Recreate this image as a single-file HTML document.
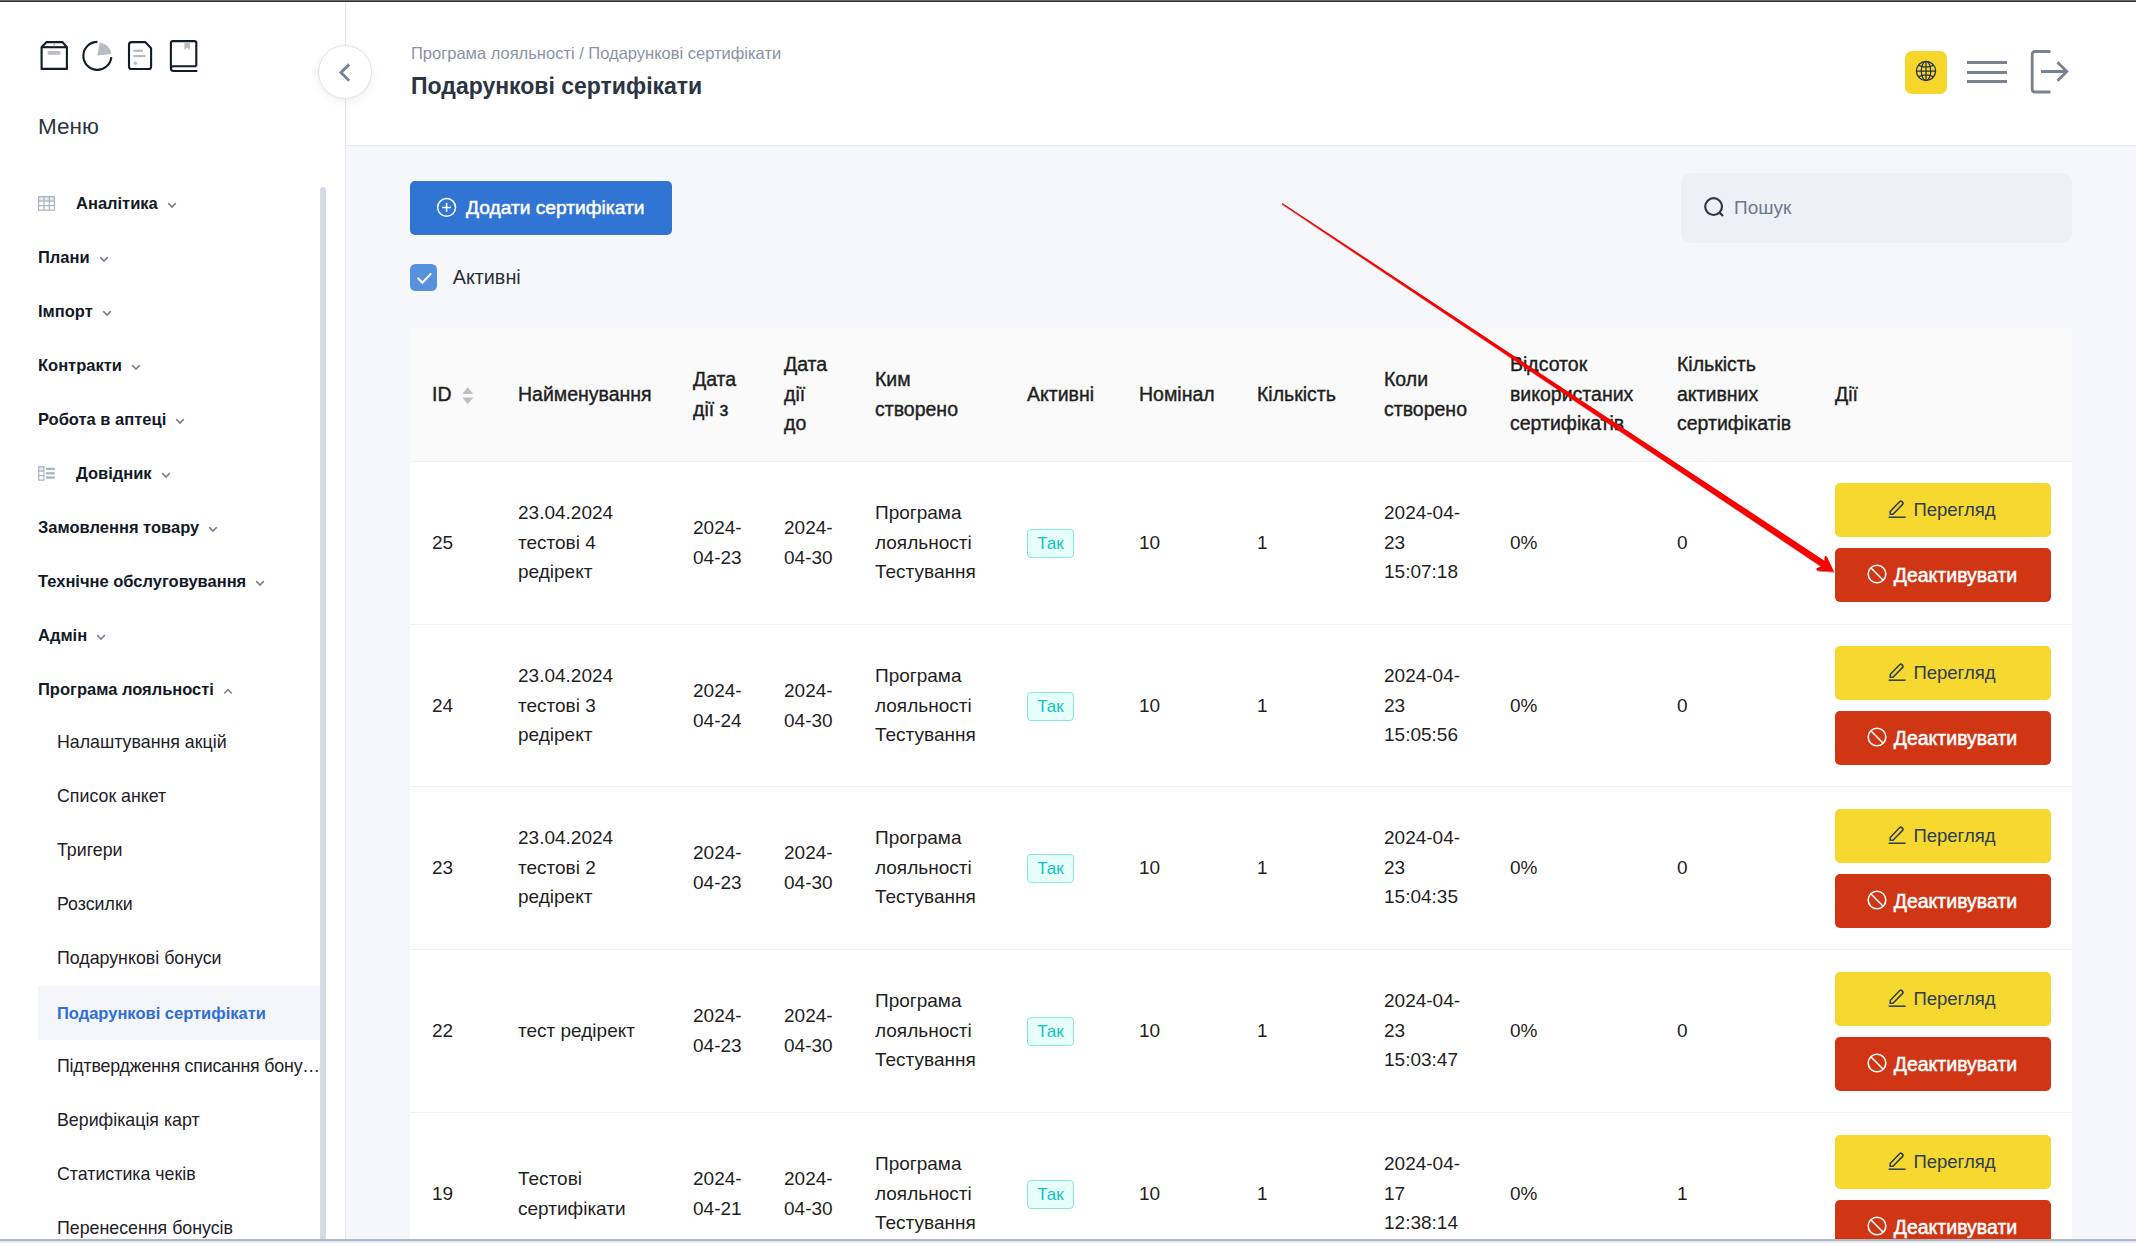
<!DOCTYPE html>
<html><head><meta charset="utf-8">
<style>
*{box-sizing:border-box;margin:0;padding:0}
html,body{width:2136px;height:1243px;overflow:hidden;background:#f5f7fa;font-family:"Liberation Sans",sans-serif;}
.abs{position:absolute}
#topline{left:0;top:0;width:2136px;height:2px;background:#2f2f2f;border-top:1px solid #676767}
#side{left:0;top:2px;width:345px;height:1237px;background:#fff;overflow:hidden}
#sideborder{left:345px;top:2px;width:1px;height:1237px;background:#e4e8ee}
#header{left:346px;top:2px;width:1790px;height:143px;background:#fff}
#headborder{left:346px;top:145px;width:1790px;height:1px;background:#e4e8ee}
#bottomline{left:0;top:1239px;width:2136px;height:2px;background:#b3b8bf}
#bottomstrip{left:0;top:1241px;width:2136px;height:2px;background:#e0eaf4}
.txt{white-space:nowrap}
.mi{font-size:16.5px;line-height:16.5px;font-weight:700;color:#121a27;white-space:nowrap}
.mi .chev{margin-left:9px;vertical-align:0px}
.ms{font-size:17.8px;line-height:17.8px;color:#1e2127;white-space:nowrap}
.ell{overflow:hidden;text-overflow:ellipsis;line-height:20px;height:20px}
.mact{font-size:16.5px;line-height:16.5px;font-weight:700;color:#2f6fd5;white-space:nowrap}
/*MAINCSS*/
.cellwrap{display:flex;align-items:center;white-space:nowrap}
.td{font-size:19px;line-height:29.5px;color:#1f1f1f}
.th{font-size:19.5px;line-height:29.5px;color:#1f1f1f;-webkit-text-stroke:0.4px #1f1f1f}
.tag{width:47px;height:29px;border:1px solid #87e8de;background:#e6fffb;border-radius:4px;color:#13c2c2;font-size:17px;line-height:27px;text-align:center}
.btn{left:1835px;width:216px;height:54px;border-radius:5px;display:flex;align-items:center;justify-content:center;white-space:nowrap}
.yb{background:#f7d82f;color:#2c3e50;font-size:18.5px}
.rb{background:#d03514;color:#fff;font-size:19.5px;-webkit-text-stroke:0.5px #fff}
/*ENDMAINCSS*/
</style></head>
<body>
<div id="topline" class="abs"></div>
<div id="side" class="abs"></div>
<div id="sideborder" class="abs"></div>
<div id="header" class="abs"></div>
<div id="headborder" class="abs"></div>

<svg class="abs" style="left:0;top:0" width="345" height="100" viewBox="0 0 345 100">
<g fill="none" stroke="#111b29" stroke-width="2.1" stroke-linejoin="round">
<path d="M41.6,47.2 L46.6,42.1 L62.6,42.1 L66.9,47.2 L66.9,68.9 L41.6,68.9 Z"/>
<path d="M41.6,47.2 L66.9,47.2"/>
<path d="M97.4,41.9 A14,14 0 1 0 111.3,57.2"/>
<path d="M131.6,42.1 L145.2,42.1 L151.1,48.2 L151.1,66.4 Q151.1,69 148.5,69 L131.6,69 Q129,69 129,66.4 L129,44.7 Q129,42.1 131.6,42.1 Z"/>
<path d="M196.3,66.3 L196.3,42.9 Q196.3,41.1 194.5,41.1 L172.9,41.1 Q170.9,41.1 170.9,43.1 L170.9,68.3"/>
<path d="M196.3,66.3 L174,66.3 Q170.9,66.3 170.9,68.6 Q170.9,71 173.6,71 L197.3,71"/>
</g>
<g fill="#b9bdc3">
<rect x="47.5" y="51" width="13.2" height="3.7" rx="1.85"/>
<rect x="53.6" y="43" width="1.6" height="3.2"/>
<path d="M97.3,55.4 L99.8,42.4 A13.2,13.2 0 0 1 111.4,54.1 Z"/>
<rect x="133.3" y="49.6" width="9.6" height="2.3"/>
<rect x="133.3" y="54.9" width="12.2" height="2.3"/>
<circle cx="135.4" cy="63.3" r="1.7"/>
<path d="M184.4,42.1 L190,42.1 L190,50 L187.2,47.6 L184.4,50 Z"/>
</g>
</svg>
<div class="abs" style="left:38px;top:116.2px;font-size:22.5px;line-height:22.5px;color:#2b3442">Меню</div>
<svg class="abs" style="left:38px;top:196px" width="18" height="15" viewBox="38 196 18 15">
<rect x="38.6" y="196.6" width="15.8" height="4.6" fill="#e4e7ec"/>
<g fill="none" stroke="#aab3c0" stroke-width="1.2">
<rect x="38.6" y="196.6" width="15.8" height="13.6"/>
<path d="M38.6,201.2 H54.4 M38.6,205.6 H54.4 M44,196.6 V210.2 M49.4,196.6 V210.2"/>
</g></svg>
<svg class="abs" style="left:38px;top:465px" width="18" height="17" viewBox="38 465 18 17">
<rect x="38.7" y="466.7" width="5.2" height="4.5" fill="#e4e7ec"/>
<g fill="none" stroke="#aab3c0" stroke-width="1.2">
<rect x="38.7" y="466.7" width="5.2" height="13.4"/>
<path d="M38.7,471.2 H43.9 M38.7,475.6 H43.9"/>
</g>
<g fill="#aab3c0"><rect x="46" y="467.8" width="8.8" height="2.3"/><rect x="46" y="472.2" width="8.8" height="2.3"/><rect x="46" y="476.4" width="8.8" height="2.3"/></g>
</svg>
<div class="abs" style="left:320px;top:187px;width:6px;height:1052px;background:#d3dae3;border-radius:3px 3px 0 0"></div>
<div class="abs mi" style="left:76px;top:195.03px">Аналітика<svg class="chev" width="10" height="7" viewBox="0 0 10 7"><path d="M1.2,1.2 L5,5 L8.8,1.2" stroke="#7a8594" stroke-width="1.7" fill="none"/></svg></div>
<div class="abs mi" style="left:38px;top:249.03px">Плани<svg class="chev" width="10" height="7" viewBox="0 0 10 7"><path d="M1.2,1.2 L5,5 L8.8,1.2" stroke="#7a8594" stroke-width="1.7" fill="none"/></svg></div>
<div class="abs mi" style="left:38px;top:303.03px">Імпорт<svg class="chev" width="10" height="7" viewBox="0 0 10 7"><path d="M1.2,1.2 L5,5 L8.8,1.2" stroke="#7a8594" stroke-width="1.7" fill="none"/></svg></div>
<div class="abs mi" style="left:38px;top:357.03px">Контракти<svg class="chev" width="10" height="7" viewBox="0 0 10 7"><path d="M1.2,1.2 L5,5 L8.8,1.2" stroke="#7a8594" stroke-width="1.7" fill="none"/></svg></div>
<div class="abs mi" style="left:38px;top:411.03px">Робота в аптеці<svg class="chev" width="10" height="7" viewBox="0 0 10 7"><path d="M1.2,1.2 L5,5 L8.8,1.2" stroke="#7a8594" stroke-width="1.7" fill="none"/></svg></div>
<div class="abs mi" style="left:76px;top:465.03px">Довідник<svg class="chev" width="10" height="7" viewBox="0 0 10 7"><path d="M1.2,1.2 L5,5 L8.8,1.2" stroke="#7a8594" stroke-width="1.7" fill="none"/></svg></div>
<div class="abs mi" style="left:38px;top:519.03px">Замовлення товару<svg class="chev" width="10" height="7" viewBox="0 0 10 7"><path d="M1.2,1.2 L5,5 L8.8,1.2" stroke="#7a8594" stroke-width="1.7" fill="none"/></svg></div>
<div class="abs mi" style="left:38px;top:573.03px">Технічне обслуговування<svg class="chev" width="10" height="7" viewBox="0 0 10 7"><path d="M1.2,1.2 L5,5 L8.8,1.2" stroke="#7a8594" stroke-width="1.7" fill="none"/></svg></div>
<div class="abs mi" style="left:38px;top:627.03px">Адмін<svg class="chev" width="10" height="7" viewBox="0 0 10 7"><path d="M1.2,1.2 L5,5 L8.8,1.2" stroke="#7a8594" stroke-width="1.7" fill="none"/></svg></div>
<div class="abs mi" style="left:38px;top:681.03px">Програма лояльності<svg class="chev" width="10" height="7" viewBox="0 0 10 7"><path d="M1.2,5.5 L5,1.7 L8.8,5.5" stroke="#7a8594" stroke-width="1.7" fill="none"/></svg></div>
<div class="abs ms" style="left:57px;top:734.23px">Налаштування акцій</div>
<div class="abs ms" style="left:57px;top:788.23px">Список анкет</div>
<div class="abs ms" style="left:57px;top:842.23px">Тригери</div>
<div class="abs ms" style="left:57px;top:896.23px">Розсилки</div>
<div class="abs ms" style="left:57px;top:950.23px">Подарункові бонуси</div>
<div class="abs" style="left:38px;top:986px;width:282px;height:54px;background:#f4f6fa"></div>
<div class="abs mact" style="left:57px;top:1005.03px">Подарункові сертифікати</div>
<div class="abs ms" style="left:57px;top:1058.23px;letter-spacing:-0.19px">Підтвердження списання бону…</div>
<div class="abs ms" style="left:57px;top:1112.23px">Верифікація карт</div>
<div class="abs ms" style="left:57px;top:1166.23px">Статистика чеків</div>
<div class="abs ms" style="left:57px;top:1220.23px">Перенесення бонусів</div>
<!-- MAIN START -->
<div class="abs" style="left:318px;top:45px;width:54px;height:54px;border-radius:50%;background:#fff;border:1px solid #dde3ea;box-shadow:0 3px 10px rgba(30,40,60,0.07)"></div>
<svg class="abs" style="left:330px;top:55px" width="30" height="35" viewBox="330 55 30 35"><path d="M349.2,64.4 L340.9,72.6 L349.2,80.8" fill="none" stroke="#7a8594" stroke-width="2.9"/></svg>
<div class="abs txt" style="left:411px;top:45.3px;font-size:16.5px;line-height:16.5px;color:#8a94a3">Програма лояльності / Подарункові сертифікати</div>
<div class="abs txt" style="left:411px;top:74.5px;font-size:23px;line-height:23px;font-weight:700;color:#2b3442">Подарункові сертифікати</div>
<div class="abs" style="left:1905px;top:51px;width:42px;height:43px;border-radius:7px;background:#f7d62b"></div>
<svg class="abs" style="left:1914px;top:59px" width="24" height="24" viewBox="0 0 24 24"><g fill="none" stroke="#263347" stroke-width="1.25"><circle cx="12" cy="12" r="9.6"/><ellipse cx="12" cy="12" rx="4.7" ry="9.6"/><path d="M12,2.4 V21.6 M2.4,12 H21.6 M4.4,6.2 Q12,10 19.6,6.2 M4.4,17.8 Q12,14 19.6,17.8"/></g></svg>
<svg class="abs" style="left:1960px;top:50px" width="120" height="46" viewBox="1960 50 120 46"><g fill="none" stroke="#778391"><path d="M1967,62.5 H2007 M1967,72.5 H2007 M1967,81.5 H2007" stroke-width="3"/>
<path d="M2050.5,51.5 H2035 Q2032.2,51.5 2032.2,54.3 V89.2 Q2032.2,92 2035,92 H2050.5" stroke-width="2.8"/>
<path d="M2041,71.5 H2066.5 M2057.5,62.2 L2066.8,71.5 L2057.5,80.8" stroke-width="2.8"/></g></svg>

<div class="abs" style="left:410px;top:181px;width:262px;height:54px;border-radius:5px;background:#3074d4"></div>
<svg class="abs" style="left:436px;top:197px" width="22" height="22" viewBox="0 0 22 22"><g fill="none" stroke="#fff" stroke-width="1.5"><circle cx="10.6" cy="10.4" r="8.9"/><path d="M10.6,6 V14.8 M6.2,10.4 H15"/></g></svg>
<div class="abs txt" style="left:466px;top:197.9px;font-size:19.2px;line-height:19.2px;color:#fff;-webkit-text-stroke:0.5px #fff">Додати сертифікати</div>
<div class="abs" style="left:1681px;top:173px;width:391px;height:70px;border-radius:10px;background:#edf0f5"></div>
<svg class="abs" style="left:1700px;top:194px" width="28" height="28" viewBox="0 0 28 28"><g fill="none" stroke="#2d3a4a" stroke-width="2.2"><circle cx="13.6" cy="12.6" r="8.4"/><path d="M19.6,18.6 L23,22"/></g></svg>
<div class="abs txt" style="left:1734px;top:198.2px;font-size:19px;line-height:19px;color:#6c7a8c">Пошук</div>
<div class="abs" style="left:410px;top:264.2px;width:27px;height:27px;border-radius:5.5px;background:#5591dd"></div>
<svg class="abs" style="left:410px;top:264px" width="27" height="27" viewBox="0 0 27 27"><path d="M7.6,13.8 L12.4,18.7 L21.2,9.4" fill="none" stroke="#fff" stroke-width="2.1"/></svg>
<div class="abs txt" style="left:452.7px;top:267.7px;font-size:19.8px;line-height:19.8px;color:#2b2f38">Активні</div>

<div class="abs" style="left:410px;top:328px;width:1662px;height:915px;background:#fff;border-radius:2px 2px 0 0"></div>
<div class="abs" style="left:410px;top:328px;width:1662px;height:133px;background:#fafafa;border-radius:2px 2px 0 0"></div>
<div class="abs" style="left:410px;top:461px;width:1662px;height:1px;background:#f0f0f0"></div>
<div class="abs cellwrap" style="left:432px;top:334.5px;height:120px"><div class="th">ID</div></div>
<svg class="abs" style="left:461.5px;top:386.5px" width="12" height="18" viewBox="0 0 12 18"><path d="M0.3,6.9 L5.8,0.3 L11.3,6.9 Z M0.3,10.6 L5.8,17.2 L11.3,10.6 Z" fill="#bfbfbf"/></svg>
<div class="abs cellwrap" style="left:518px;top:334.5px;height:120px"><div class="th">Найменування</div></div>
<div class="abs cellwrap" style="left:693px;top:334.5px;height:120px"><div class="th">Дата<br>дії з</div></div>
<div class="abs cellwrap" style="left:784px;top:334.5px;height:120px"><div class="th">Дата<br>дії<br>до</div></div>
<div class="abs cellwrap" style="left:875px;top:334.5px;height:120px"><div class="th">Ким<br>створено</div></div>
<div class="abs cellwrap" style="left:1027px;top:334.5px;height:120px"><div class="th">Активні</div></div>
<div class="abs cellwrap" style="left:1139px;top:334.5px;height:120px"><div class="th">Номінал</div></div>
<div class="abs cellwrap" style="left:1257px;top:334.5px;height:120px"><div class="th">Кількість</div></div>
<div class="abs cellwrap" style="left:1384px;top:334.5px;height:120px"><div class="th">Коли<br>створено</div></div>
<div class="abs cellwrap" style="left:1510px;top:334.5px;height:120px"><div class="th">Відсоток<br>використаних<br>сертифікатів</div></div>
<div class="abs cellwrap" style="left:1677px;top:334.5px;height:120px"><div class="th">Кількість<br>активних<br>сертифікатів</div></div>
<div class="abs cellwrap" style="left:1835px;top:334.5px;height:120px"><div class="th">Дії</div></div>
<div class="abs cellwrap" style="left:432px;top:482.5px;height:120px"><div class="td">25</div></div>
<div class="abs cellwrap" style="left:518px;top:482.5px;height:120px"><div class="td">23.04.2024<br>тестові 4<br>редірект</div></div>
<div class="abs cellwrap" style="left:693px;top:482.5px;height:120px"><div class="td">2024-<br>04-23</div></div>
<div class="abs cellwrap" style="left:784px;top:482.5px;height:120px"><div class="td">2024-<br>04-30</div></div>
<div class="abs cellwrap" style="left:875px;top:482.5px;height:120px"><div class="td">Програма<br>лояльності<br>Тестування</div></div>
<div class="abs tag" style="left:1027px;top:529.0px">Так</div>
<div class="abs cellwrap" style="left:1139px;top:482.5px;height:120px"><div class="td">10</div></div>
<div class="abs cellwrap" style="left:1257px;top:482.5px;height:120px"><div class="td">1</div></div>
<div class="abs cellwrap" style="left:1384px;top:482.5px;height:120px"><div class="td">2024-04-<br>23<br>15:07:18</div></div>
<div class="abs cellwrap" style="left:1510px;top:482.5px;height:120px"><div class="td">0%</div></div>
<div class="abs cellwrap" style="left:1677px;top:482.5px;height:120px"><div class="td">0</div></div>
<div class="abs btn yb" style="top:483px"><svg width="20" height="20" viewBox="0 0 20 20" style="margin-right:6px;margin-left:-3px;position:relative;top:-2.5px"><g fill="none" stroke="#2c3e50" stroke-width="1.5"><path d="M3.2,13.4 L12.8,3.6 Q13.8,2.6 14.8,3.6 L15.6,4.4 Q16.6,5.4 15.6,6.4 L6,16.2 L3.2,16.2 Z"/><path d="M1.6,19.2 H18.6"/></g></svg>Перегляд</div>
<div class="abs btn rb" style="top:548px"><svg width="20" height="20" viewBox="0 0 20 20" style="margin-right:7px;position:relative;top:-1px;margin-left:-2px"><g fill="none" stroke="#fff" stroke-width="1.6"><circle cx="10" cy="10" r="8.8"/><path d="M3.8,3.8 L16.2,16.2"/></g></svg>Деактивувати</div>
<div class="abs cellwrap" style="left:432px;top:645.5px;height:120px"><div class="td">24</div></div>
<div class="abs cellwrap" style="left:518px;top:645.5px;height:120px"><div class="td">23.04.2024<br>тестові 3<br>редірект</div></div>
<div class="abs cellwrap" style="left:693px;top:645.5px;height:120px"><div class="td">2024-<br>04-24</div></div>
<div class="abs cellwrap" style="left:784px;top:645.5px;height:120px"><div class="td">2024-<br>04-30</div></div>
<div class="abs cellwrap" style="left:875px;top:645.5px;height:120px"><div class="td">Програма<br>лояльності<br>Тестування</div></div>
<div class="abs tag" style="left:1027px;top:692.0px">Так</div>
<div class="abs cellwrap" style="left:1139px;top:645.5px;height:120px"><div class="td">10</div></div>
<div class="abs cellwrap" style="left:1257px;top:645.5px;height:120px"><div class="td">1</div></div>
<div class="abs cellwrap" style="left:1384px;top:645.5px;height:120px"><div class="td">2024-04-<br>23<br>15:05:56</div></div>
<div class="abs cellwrap" style="left:1510px;top:645.5px;height:120px"><div class="td">0%</div></div>
<div class="abs cellwrap" style="left:1677px;top:645.5px;height:120px"><div class="td">0</div></div>
<div class="abs btn yb" style="top:646px"><svg width="20" height="20" viewBox="0 0 20 20" style="margin-right:6px;margin-left:-3px;position:relative;top:-2.5px"><g fill="none" stroke="#2c3e50" stroke-width="1.5"><path d="M3.2,13.4 L12.8,3.6 Q13.8,2.6 14.8,3.6 L15.6,4.4 Q16.6,5.4 15.6,6.4 L6,16.2 L3.2,16.2 Z"/><path d="M1.6,19.2 H18.6"/></g></svg>Перегляд</div>
<div class="abs btn rb" style="top:711px"><svg width="20" height="20" viewBox="0 0 20 20" style="margin-right:7px;position:relative;top:-1px;margin-left:-2px"><g fill="none" stroke="#fff" stroke-width="1.6"><circle cx="10" cy="10" r="8.8"/><path d="M3.8,3.8 L16.2,16.2"/></g></svg>Деактивувати</div>
<div class="abs cellwrap" style="left:432px;top:807.5px;height:120px"><div class="td">23</div></div>
<div class="abs cellwrap" style="left:518px;top:807.5px;height:120px"><div class="td">23.04.2024<br>тестові 2<br>редірект</div></div>
<div class="abs cellwrap" style="left:693px;top:807.5px;height:120px"><div class="td">2024-<br>04-23</div></div>
<div class="abs cellwrap" style="left:784px;top:807.5px;height:120px"><div class="td">2024-<br>04-30</div></div>
<div class="abs cellwrap" style="left:875px;top:807.5px;height:120px"><div class="td">Програма<br>лояльності<br>Тестування</div></div>
<div class="abs tag" style="left:1027px;top:854.0px">Так</div>
<div class="abs cellwrap" style="left:1139px;top:807.5px;height:120px"><div class="td">10</div></div>
<div class="abs cellwrap" style="left:1257px;top:807.5px;height:120px"><div class="td">1</div></div>
<div class="abs cellwrap" style="left:1384px;top:807.5px;height:120px"><div class="td">2024-04-<br>23<br>15:04:35</div></div>
<div class="abs cellwrap" style="left:1510px;top:807.5px;height:120px"><div class="td">0%</div></div>
<div class="abs cellwrap" style="left:1677px;top:807.5px;height:120px"><div class="td">0</div></div>
<div class="abs btn yb" style="top:809px"><svg width="20" height="20" viewBox="0 0 20 20" style="margin-right:6px;margin-left:-3px;position:relative;top:-2.5px"><g fill="none" stroke="#2c3e50" stroke-width="1.5"><path d="M3.2,13.4 L12.8,3.6 Q13.8,2.6 14.8,3.6 L15.6,4.4 Q16.6,5.4 15.6,6.4 L6,16.2 L3.2,16.2 Z"/><path d="M1.6,19.2 H18.6"/></g></svg>Перегляд</div>
<div class="abs btn rb" style="top:874px"><svg width="20" height="20" viewBox="0 0 20 20" style="margin-right:7px;position:relative;top:-1px;margin-left:-2px"><g fill="none" stroke="#fff" stroke-width="1.6"><circle cx="10" cy="10" r="8.8"/><path d="M3.8,3.8 L16.2,16.2"/></g></svg>Деактивувати</div>
<div class="abs cellwrap" style="left:432px;top:970.5px;height:120px"><div class="td">22</div></div>
<div class="abs cellwrap" style="left:518px;top:970.5px;height:120px"><div class="td">тест редірект</div></div>
<div class="abs cellwrap" style="left:693px;top:970.5px;height:120px"><div class="td">2024-<br>04-23</div></div>
<div class="abs cellwrap" style="left:784px;top:970.5px;height:120px"><div class="td">2024-<br>04-30</div></div>
<div class="abs cellwrap" style="left:875px;top:970.5px;height:120px"><div class="td">Програма<br>лояльності<br>Тестування</div></div>
<div class="abs tag" style="left:1027px;top:1017.0px">Так</div>
<div class="abs cellwrap" style="left:1139px;top:970.5px;height:120px"><div class="td">10</div></div>
<div class="abs cellwrap" style="left:1257px;top:970.5px;height:120px"><div class="td">1</div></div>
<div class="abs cellwrap" style="left:1384px;top:970.5px;height:120px"><div class="td">2024-04-<br>23<br>15:03:47</div></div>
<div class="abs cellwrap" style="left:1510px;top:970.5px;height:120px"><div class="td">0%</div></div>
<div class="abs cellwrap" style="left:1677px;top:970.5px;height:120px"><div class="td">0</div></div>
<div class="abs btn yb" style="top:972px"><svg width="20" height="20" viewBox="0 0 20 20" style="margin-right:6px;margin-left:-3px;position:relative;top:-2.5px"><g fill="none" stroke="#2c3e50" stroke-width="1.5"><path d="M3.2,13.4 L12.8,3.6 Q13.8,2.6 14.8,3.6 L15.6,4.4 Q16.6,5.4 15.6,6.4 L6,16.2 L3.2,16.2 Z"/><path d="M1.6,19.2 H18.6"/></g></svg>Перегляд</div>
<div class="abs btn rb" style="top:1037px"><svg width="20" height="20" viewBox="0 0 20 20" style="margin-right:7px;position:relative;top:-1px;margin-left:-2px"><g fill="none" stroke="#fff" stroke-width="1.6"><circle cx="10" cy="10" r="8.8"/><path d="M3.8,3.8 L16.2,16.2"/></g></svg>Деактивувати</div>
<div class="abs cellwrap" style="left:432px;top:1133.5px;height:120px"><div class="td">19</div></div>
<div class="abs cellwrap" style="left:518px;top:1133.5px;height:120px"><div class="td">Тестові<br>сертифікати</div></div>
<div class="abs cellwrap" style="left:693px;top:1133.5px;height:120px"><div class="td">2024-<br>04-21</div></div>
<div class="abs cellwrap" style="left:784px;top:1133.5px;height:120px"><div class="td">2024-<br>04-30</div></div>
<div class="abs cellwrap" style="left:875px;top:1133.5px;height:120px"><div class="td">Програма<br>лояльності<br>Тестування</div></div>
<div class="abs tag" style="left:1027px;top:1180.0px">Так</div>
<div class="abs cellwrap" style="left:1139px;top:1133.5px;height:120px"><div class="td">10</div></div>
<div class="abs cellwrap" style="left:1257px;top:1133.5px;height:120px"><div class="td">1</div></div>
<div class="abs cellwrap" style="left:1384px;top:1133.5px;height:120px"><div class="td">2024-04-<br>17<br>12:38:14</div></div>
<div class="abs cellwrap" style="left:1510px;top:1133.5px;height:120px"><div class="td">0%</div></div>
<div class="abs cellwrap" style="left:1677px;top:1133.5px;height:120px"><div class="td">1</div></div>
<div class="abs btn yb" style="top:1135px"><svg width="20" height="20" viewBox="0 0 20 20" style="margin-right:6px;margin-left:-3px;position:relative;top:-2.5px"><g fill="none" stroke="#2c3e50" stroke-width="1.5"><path d="M3.2,13.4 L12.8,3.6 Q13.8,2.6 14.8,3.6 L15.6,4.4 Q16.6,5.4 15.6,6.4 L6,16.2 L3.2,16.2 Z"/><path d="M1.6,19.2 H18.6"/></g></svg>Перегляд</div>
<div class="abs btn rb" style="top:1200px"><svg width="20" height="20" viewBox="0 0 20 20" style="margin-right:7px;position:relative;top:-1px;margin-left:-2px"><g fill="none" stroke="#fff" stroke-width="1.6"><circle cx="10" cy="10" r="8.8"/><path d="M3.8,3.8 L16.2,16.2"/></g></svg>Деактивувати</div>
<div class="abs" style="left:410px;top:624px;width:1662px;height:1px;background:#f0f0f0"></div>
<div class="abs" style="left:410px;top:786px;width:1662px;height:1px;background:#f0f0f0"></div>
<div class="abs" style="left:410px;top:949px;width:1662px;height:1px;background:#f0f0f0"></div>
<div class="abs" style="left:410px;top:1112px;width:1662px;height:1px;background:#f0f0f0"></div>
<svg class="abs" style="left:0;top:0" width="2136" height="1243" viewBox="0 0 2136 1243"><defs><filter id="sh" x="-5%" y="-5%" width="110%" height="110%"><feDropShadow dx="0.6" dy="1" stdDeviation="0.7" flood-color="#000" flood-opacity="0.45"/></filter></defs><path d="M1282.3,202.9 L1824.4,560.7 L1824.6,556.9 Q1825.3,555.3 1826.6,556.3 L1833.9,571.8 L1817.6,570.6 Q1815.6,569.6 1816.9,568.1 L1821.1,566.5 L1281.7,203.9 Z" fill="#fa0000" filter="url(#sh)"/></svg>
<!-- MAIN END -->

<div id="bottomline" class="abs"></div>
<div id="bottomstrip" class="abs"></div>
</body></html>
